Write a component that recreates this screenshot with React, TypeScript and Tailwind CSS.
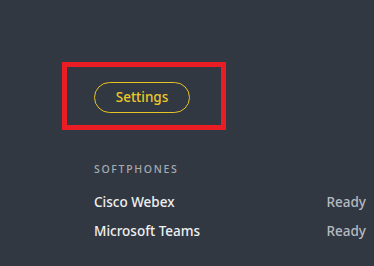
export default function App() {
  return (
    <div
      className="h-[266px] w-[374px] bg-[#323841] overflow-hidden"
      style={{ fontFamily: '"Noto Sans", "Liberation Sans", sans-serif' }}
    >
      <div className="pt-[62px] pl-[62px]">
        <div className="w-[164px] h-[68px] border-[5px] border-[#ea1c24] pl-[27px] pt-[15px]">
          <button className="h-[31px] w-[96px] rounded-full border border-[#e6c222] text-[#ecc82a] text-[13.5px] font-medium leading-none">
            Settings
          </button>
        </div>
      </div>
      <div className="pl-[94px] pr-[8px] pt-[32px]">
        <div className="text-[10.5px] font-medium leading-[14px] tracking-[0.16em] text-[#a6abb2]">
          SOFTPHONES
        </div>
        <div className="mt-[17px] flex flex-col gap-[11px]">
          <div className="flex justify-between text-[13.5px] font-medium leading-[18px]">
            <span className="text-[#eef0f2]">Cisco Webex</span>
            <span className="text-[#b6bac0]">Ready</span>
          </div>
          <div className="flex justify-between text-[13.5px] font-medium leading-[18px]">
            <span className="text-[#eef0f2]">Microsoft Teams</span>
            <span className="text-[#b6bac0]">Ready</span>
          </div>
        </div>
      </div>
    </div>
  );
}
